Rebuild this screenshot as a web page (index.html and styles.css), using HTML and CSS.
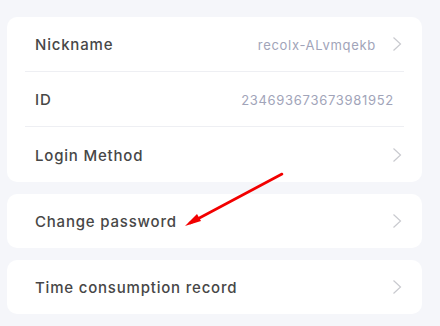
FILE: index.html
```html
<!DOCTYPE html>
<html>
<head>
<meta charset="utf-8">
<link rel="stylesheet" href="styles.css">
</head>
<body>
<div class="page">
  <div class="card">
    <div class="row">
      <div class="row-inner">
        <span class="label">Nickname</span>
        <span class="value">recolx-ALvmqekb</span>
        <svg class="chev" width="10" height="16" viewBox="0 0 10 16"><path d="M1.5 1.5 L8.5 8 L1.5 14.5" fill="none" stroke="#c9cacf" stroke-width="1.2"/></svg>
      </div>
    </div>
    <div class="row">
      <div class="row-inner">
        <span class="label">ID</span>
        <span class="value value-end">234693673673981952</span>
      </div>
    </div>
    <div class="row">
      <div class="row-inner last">
        <span class="label">Login Method</span>
        <svg class="chev" width="10" height="16" viewBox="0 0 10 16"><path d="M1.5 1.5 L8.5 8 L1.5 14.5" fill="none" stroke="#c9cacf" stroke-width="1.2"/></svg>
      </div>
    </div>
  </div>
  <div class="card">
    <div class="row single">
      <div class="row-inner last">
        <span class="label">Change password</span>
        <svg class="chev" width="10" height="16" viewBox="0 0 10 16"><path d="M1.5 1.5 L8.5 8 L1.5 14.5" fill="none" stroke="#c9cacf" stroke-width="1.2"/></svg>
      </div>
    </div>
  </div>
  <div class="card">
    <div class="row single">
      <div class="row-inner last">
        <span class="label">Time consumption record</span>
        <svg class="chev" width="10" height="16" viewBox="0 0 10 16"><path d="M1.5 1.5 L8.5 8 L1.5 14.5" fill="none" stroke="#c9cacf" stroke-width="1.2"/></svg>
      </div>
    </div>
  </div>
</div>
<svg class="arrow" width="440" height="326" viewBox="0 0 440 326">
  <line x1="282" y1="174" x2="190" y2="223" stroke="#f20000" stroke-width="2.6" stroke-linecap="round"/>
  <path d="M185 226 L197 214 L201 221 Z" fill="#f20000"/>
</svg>
</body>
</html>
```

FILE: styles.css
```css
html, body {
  margin: 0;
  padding: 0;
  background: #f5f6fa;
  font-family: Inter, "Noto Sans", sans-serif;
}
.page {
  display: flex;
  flex-direction: column;
  gap: 12px;
  padding: 17px 18px 0 7px;
  width: 415px;
}
.card {
  background: #ffffff;
  border-radius: 10px;
  overflow: hidden;
}
.row {
  padding: 0 18px;
  height: 55px;
}
.row.single {
  height: 54px;
}
.row-inner {
  height: 100%;
  box-sizing: border-box;
  display: flex;
  align-items: center;
  padding: 0 2px 0 10px;
  border-bottom: 1px solid #eeeff3;
}
.row-inner.last {
  border-bottom: none;
}
.label {
  flex: 1;
  font-size: 15px;
  font-weight: 500;
  color: #474747;
  letter-spacing: 0.8px;
  padding-top: 1px;
}
.value {
  font-size: 13px;
  color: #a1a4b9;
  letter-spacing: 0.7px;
  padding-top: 1px;
}
.value-end {
  margin-right: 8px;
}
.chev {
  margin-left: 16px;
  display: block;
}
.arrow {
  position: absolute;
  left: 0;
  top: 0;
  pointer-events: none;
}
```
